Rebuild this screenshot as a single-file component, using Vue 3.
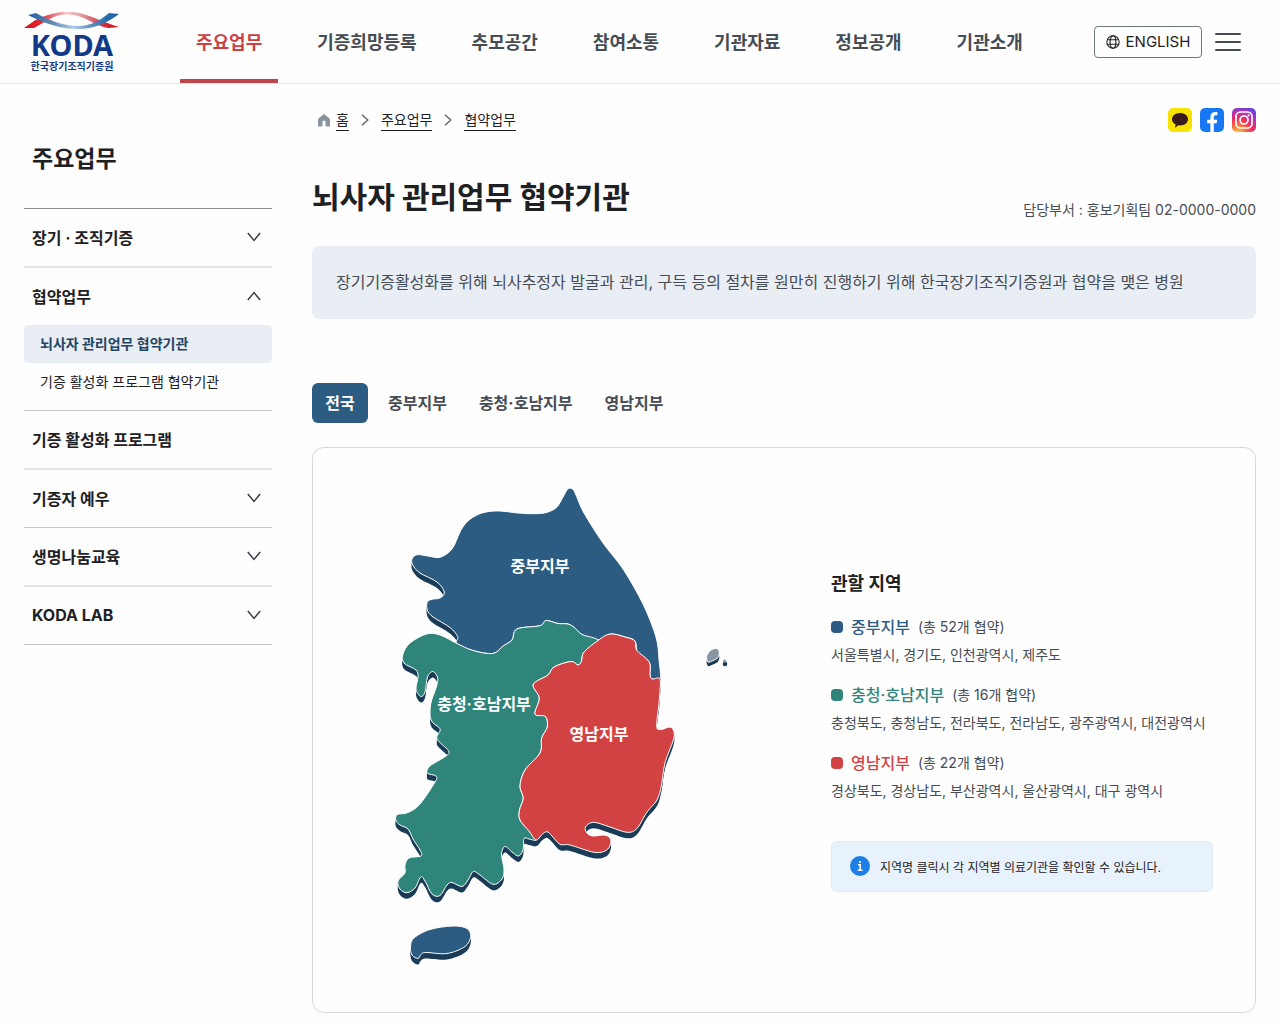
<script setup>
import { ref } from 'vue'

const nav = ['주요업무', '기증희망등록', '추모공간', '참여소통', '기관자료', '정보공개', '기관소개']

const menu = ref([
  { label: '장기 · 조직기증', expandable: true },
  {
    label: '협약업무',
    expandable: true,
    open: true,
    children: ['뇌사자 관리업무 협약기관', '기증 활성화 프로그램 협약기관'],
  },
  { label: '기증 활성화 프로그램' },
  { label: '기증자 예우', expandable: true },
  { label: '생명나눔교육', expandable: true },
  { label: 'KODA LAB', expandable: true },
])

const crumbs = ['홈', '주요업무', '협약업무']

const tabs = ['전국', '중부지부', '충청·호남지부', '영남지부']
const activeTab = ref('전국')

const branches = [
  { name: '중부지부', tone: 'blue', count: '(총 52개 협약)', areas: '서울특별시, 경기도, 인천광역시, 제주도' },
  { name: '충청·호남지부', tone: 'green', count: '(총 16개 협약)', areas: '충청북도, 충청남도, 전라북도, 전라남도, 광주광역시, 대전광역시' },
  { name: '영남지부', tone: 'red', count: '(총 22개 협약)', areas: '경상북도, 경상남도, 부산광역시, 울산광역시, 대구 광역시' },
]

// Closed smooth curve (Catmull-Rom) through a list of outline points
function outline(points) {
  const p = points.trim().split(/\s+/).map((s) => s.split(',').map(Number))
  const n = p.length
  let d = `M${p[0]}`
  for (let i = 0; i < n; i++) {
    const a = p[(i - 1 + n) % n]
    const b = p[i]
    const c = p[(i + 1) % n]
    const e = p[(i + 2) % n]
    const c1 = [b[0] + (c[0] - a[0]) / 6, b[1] + (c[1] - a[1]) / 6]
    const c2 = [c[0] - (e[0] - b[0]) / 6, c[1] - (e[1] - b[1]) / 6]
    d += `C${c1.map((v) => v.toFixed(1))} ${c2.map((v) => v.toFixed(1))} ${c}`
  }
  return d + 'Z'
}

const regions = [
  {
    tone: 'blue',
    label: '중부지부',
    x: 540,
    y: 572,
    d: outline(`412,559 417,554.7 428,556 440,557.3 452,549 460,532 466,523 475,516 486,512 500,511 518,513 537,513.7
      548,512 557,507 563,497 567,490 570,488.3 573,489.5 576,495 584,513 603,543 623,569 643,604 656,637 659,660 660,679
      652,678.5 650,675 649.3,662 638,654 635,641 625,637 610,634 598,640 582,634.5 575,628 568,624 558,623.5 546,620.5
      540,625.7 517,629 512,640 503,646 493,653.5 473,650.5 457,643.5 457.7,636.7 450,627.5 433,617 427.3,610 427.3,602
      432,599.3 440,598 444.3,592 437,582 420,573 412.7,565`),
  },
  {
    tone: 'green',
    label: '충청·호남지부',
    x: 484,
    y: 710,
    d: outline(`457,643.5 440,635 426.7,634 410,643 403,654 404,663 416,670 418,677 416,689 420.7,696.5 425,692 427.5,677
      433,671.5 437.7,678 436,688 430.7,704 431,720 439,727.5 440,731 437,739 448.3,750.5 446,756 430,766 427.3,773
      436,776 435,782 420,804 408,812.5 397.5,814.5 395.7,820 400,825 408,829 413,839 420,850 421,856 409,858
      405,865 405,873 398,881 400,889 407,892.7 415,888 420.7,877 425,881 432,894 440,895.5 447,885 452,882.5
      462,886.5 468,880 473.3,871.5 480,875 493,884.3 502,879 504,869 501.5,854 505,846.5 512,852 518.5,856 523,850
      524,838.5 529,839 536,840 529,831 520,820 519.5,810 523.3,798 520,786 525,770 540,753 541.7,738 547.3,727
      545.5,716.5 535,714 539.3,698 533.3,684.5 548,675 554,667 571,661.5 578,665 581.5,661 584,652 598,640.5
      582,634.5 575,628 568,624 558,623.5 546,620.5 540,625.7 517,629 512,640 503,646 493,653.5 473,650.5`),
  },
  {
    tone: 'red',
    label: '영남지부',
    x: 599,
    y: 740,
    d: outline(`598,640.5 610,634 625,637 635,641 636.5,650 649.3,662 650,675 652.5,679 660,679.3 659.3,700 656.7,726
      661,729.5 670,727 674,732 673,741 665,763 661.5,785 657,800 647,812 637,828.5 627,832.3 610,827 593.5,822.3
      585.5,827 587,833 593,836 604,835 610,838 610.5,844 606,850.5 594,852.3 570,845 560,844.3 552,836 547,831.7 542,834.5
      536,840 529,831 520,820 519.5,810 523.3,798 520,786 525,770 540,753 541.7,738 547.3,727 545.5,716.5 535,714
      539.3,698 533.3,684.5 548,675 554,667 571,661.5 578,665 581.5,661 584,652`),
  },
]

const jeju = outline(`410.5,947 414,938 430,929.5 453,926 467,928.5 470.7,936.5 465,946.5 447,953.5 426,952.5 421,954.5 418,958.5 412,955`)
const ulleung = outline(`706.7,656 711,650 717,648.5 719.3,652 718,657.5 713,660.5 708,662`)
const depth = [6, 4, 2]
</script>

<template>
  <div class="page">
    <header class="header">
      <a class="logo" href="#" aria-label="KODA 한국장기조직기증원">
        <svg class="ribbon" viewBox="0 0 96 18" aria-hidden="true">
          <defs>
            <linearGradient id="ribbonRed">
              <stop offset="0" stop-color="#d8101c" />
              <stop offset="0.18" stop-color="#dd2a33" />
              <stop offset="0.45" stop-color="#f3c9cc" />
              <stop offset="0.65" stop-color="#e08a90" />
              <stop offset="0.84" stop-color="#cf2c38" />
              <stop offset="1" stop-color="#d8101c" />
            </linearGradient>
            <linearGradient id="ribbonBlue">
              <stop offset="0" stop-color="#1d5fa8" />
              <stop offset="0.25" stop-color="#5f86ad" />
              <stop offset="0.5" stop-color="#a9cbe6" />
              <stop offset="0.72" stop-color="#5c87b4" />
              <stop offset="0.85" stop-color="#2c6fae" />
              <stop offset="1" stop-color="#1d5fa8" />
            </linearGradient>
          </defs>
          <path fill="url(#ribbonRed)" d="M0 16 10 9C28-1 46-2 59 2 70 5 82 11 95 15L85 16C76 15 67 9 57 5 45 1 34 2 24 8L10 16Z" />
          <path fill="url(#ribbonBlue)" d="M4 3 12 1C28 10 42 14 54 14 68 14 78 7 85 1L95 2C84 10 72 17 54 17 36 17 20 11 4 3Z" />
        </svg>
        <span class="logo-name">KODA</span>
        <span class="logo-sub">한국장기조직기증원</span>
      </a>
      <nav class="nav" aria-label="주 메뉴">
        <a v-for="(item, i) in nav" :key="item" href="#" :class="{ current: i === 0 }">{{ item }}</a>
      </nav>
      <div class="tools">
        <button type="button" class="english">
          <svg width="14" height="14" viewBox="0 0 14 14" fill="none" stroke="#1e2124" stroke-width="1.1" aria-hidden="true">
            <circle cx="7" cy="7" r="6.2" />
            <ellipse cx="7" cy="7" rx="2.9" ry="6.2" />
            <path d="M1.5 4.7h11M1.5 9.3h11" />
          </svg>
          ENGLISH
        </button>
        <button type="button" class="burger" aria-label="전체 메뉴">
          <svg width="26" height="20" viewBox="0 0 26 20" stroke="#464c53" stroke-width="2" stroke-linecap="round" aria-hidden="true">
            <path d="M1 2h24M1 10h24M1 18h24" />
          </svg>
        </button>
      </div>
    </header>

    <div class="body">
      <aside class="side">
        <h2>주요업무</h2>
        <ul class="menu">
          <li v-for="item in menu" :key="item.label">
            <button type="button" class="menu-head" :aria-expanded="item.expandable ? !!item.open : undefined" @click="item.expandable && (item.open = !item.open)">
              {{ item.label }}
              <svg v-if="item.expandable" :class="{ up: item.open }" width="14" height="10" viewBox="0 0 14 10" fill="none" stroke="#33363d" stroke-width="1.4" aria-hidden="true">
                <path d="M.8 1 7 8.4 13.2 1" />
              </svg>
            </button>
            <ul v-if="item.open && item.children" class="sub">
              <li v-for="(child, i) in item.children" :key="child">
                <a href="#" :class="{ current: i === 0 }">{{ child }}</a>
              </li>
            </ul>
          </li>
        </ul>
      </aside>

      <main class="main">
        <div class="top">
          <nav class="crumbs" aria-label="현재 위치">
            <svg class="home" width="14" height="14" viewBox="0 0 14 14" aria-hidden="true">
              <path fill="#8a949e" stroke="#8a949e" stroke-linejoin="round" d="M7 1.5 1.500 6V13h3.500V9a2 2 0 0 1 4 0v4h3.500V6Z" />
            </svg>
            <template v-for="(crumb, i) in crumbs" :key="crumb">
              <svg v-if="i" class="sep" width="8" height="12" viewBox="0 0 8 12" fill="none" stroke="#58616a" stroke-width="1.3" aria-hidden="true">
                <path d="M1 .8 6.8 6 1 11.2" />
              </svg>
              <a href="#">{{ crumb }}</a>
            </template>
          </nav>
          <div class="social">
            <a href="#" aria-label="카카오톡">
              <svg viewBox="0 0 24 24">
                <rect width="24" height="24" rx="5" fill="#f7e200" />
                <path fill="#391b1b" d="M12 5c-4.6 0-8 2.8-8 6.2 0 2.3 1.400 4.2 3.600 5.300L7 19.800l3.400-2.500c.5.1 1 .1 1.600.1 4.600 0 8-2.700 8-6.200S16.600 5 12 5Z" />
              </svg>
            </a>
            <a href="#" aria-label="페이스북">
              <svg viewBox="0 0 24 24">
                <rect width="24" height="24" rx="5" fill="#1877f2" />
                <path fill="#fff" d="M10.400 24v-8.800H7.200v-3.500h3.200V9.200c0-3.400 1.900-5.200 4.900-5.200 1 0 1.700.1 2.100.2v3.100h-1.500c-1.500 0-2.100.7-2.100 2v2.400h3.500l-.6 3.500h-2.900V24Z" />
              </svg>
            </a>
            <a href="#" aria-label="인스타그램">
              <svg viewBox="0 0 24 24">
                <defs>
                  <radialGradient id="insta" cx="0.25" cy="1.05" r="1.2">
                    <stop offset="0" stop-color="#ffcb4f" />
                    <stop offset="0.25" stop-color="#fb7a35" />
                    <stop offset="0.5" stop-color="#ee2f5b" />
                    <stop offset="0.75" stop-color="#b134b8" />
                    <stop offset="1" stop-color="#5a45dd" />
                  </radialGradient>
                </defs>
                <rect width="24" height="24" rx="5" fill="url(#insta)" />
                <g fill="none" stroke="#fff" stroke-width="1.7">
                  <rect x="4" y="4" width="16" height="16" rx="4.5" />
                  <circle cx="12" cy="12" r="4" />
                </g>
                <circle cx="16.6" cy="7.4" r="1.1" fill="#fff" />
              </svg>
            </a>
          </div>
        </div>

        <div class="heading">
          <h1>뇌사자 관리업무 협약기관</h1>
          <p>담당부서 : 홍보기획팀 02-0000-0000</p>
        </div>

        <p class="notice">장기기증활성화를 위해 뇌사추정자 발굴과 관리, 구득 등의 절차를 원만히 진행하기 위해 한국장기조직기증원과 협약을 맺은 병원</p>

        <div class="tabs" role="tablist">
          <button v-for="tab in tabs" :key="tab" type="button" role="tab" :aria-selected="tab === activeTab" @click="activeTab = tab">{{ tab }}</button>
        </div>

        <section class="panel">
          <div class="map">
            <svg viewBox="390 480 340 500" role="group" aria-label="지부별 지도">
              <g class="shade">
                <g v-for="dy in depth" :key="dy" :transform="`translate(0 ${dy})`">
                  <path v-for="r in regions" :key="r.tone" :d="r.d" />
                  <path :d="jeju" />
                </g>
                <path :d="ulleung" transform="translate(0 4)" />
                <circle cx="725" cy="664" r="2.3" />
              </g>
              <a v-for="r in regions" :key="r.tone" href="#">
                <path class="land" :class="r.tone" :d="r.d" />
              </a>
              <path class="land blue" :d="jeju" />
              <path class="land gray" :d="ulleung" />
              <circle class="gray" cx="724.7" cy="661" r="1.6" />
              <text v-for="r in regions" :key="r.label" :x="r.x" :y="r.y">{{ r.label }}</text>
            </svg>
          </div>
          <div class="legend">
            <h3>관할 지역</h3>
            <dl>
              <div v-for="b in branches" :key="b.name" :class="b.tone">
                <dt><i></i><strong>{{ b.name }}</strong><span>{{ b.count }}</span></dt>
                <dd>{{ b.areas }}</dd>
              </div>
            </dl>
            <p class="info">
              <svg width="20" height="20" viewBox="0 0 20 20" aria-hidden="true">
                <circle cx="10" cy="10" r="10" fill="#1d7fe6" />
                <path fill="none" stroke="#fff" stroke-width="1.5" d="M8 8.8h2.200v5.200M7.700 14.200h4.800" />
                <circle cx="10" cy="6" r="1.1" fill="#fff" />
              </svg>
              지역명 클릭시 각 지역별 의료기관을 확인할 수 있습니다.
            </p>
          </div>
        </section>
      </main>
    </div>
  </div>
</template>

<style>
body {
  background: #fefefe;
}
</style>

<style scoped>
.page {
  font-family: Inter, "Noto Sans CJK KR", sans-serif;
  font-size: 14px;
  color: #1e2124;
  word-break: keep-all;
}
.page * {
  box-sizing: border-box;
}
h1, h2, h3, p, ul, dl, dd {
  margin: 0;
  padding: 0;
}
ul {
  list-style: none;
}
a {
  color: inherit;
  text-decoration: none;
}
button {
  font: inherit;
  color: inherit;
  background: none;
  border: 0;
  padding: 0;
  cursor: pointer;
}
svg {
  display: block;
  flex: none;
}

.header {
  display: flex;
  align-items: center;
  height: 84px;
  padding: 0 39px 0 24px;
  border-bottom: 1px solid #e4e6e8;
}
.logo {
  display: flex;
  flex-direction: column;
  align-items: center;
  width: 96px;
  margin-right: 60px;
  color: #143a87;
}
.ribbon {
  width: 96px;
  height: 18px;
}
.logo-name {
  font: 700 29px/30px "Noto Sans", sans-serif;
}
.logo-sub {
  font-size: 10px;
  font-weight: 700;
  line-height: 12px;
  white-space: nowrap;
}
.nav {
  display: flex;
  align-self: stretch;
  gap: 23px;
}
.nav a {
  display: flex;
  align-items: center;
  padding: 2px 16px 0;
  border-bottom: 4px solid transparent;
  font-size: 18px;
  font-weight: 700;
  white-space: nowrap;
  color: #464c53;
}
.nav a.current {
  color: #cb3f45;
  border-color: #c0464a;
}
.tools {
  display: flex;
  align-items: center;
  gap: 13px;
  margin-left: auto;
}
.english {
  display: flex;
  align-items: center;
  justify-content: center;
  gap: 6px;
  width: 108px;
  height: 32px;
  border: 1px solid #6d7882;
  border-radius: 4px;
  font-size: 15px;
}

.body {
  display: flex;
  gap: 40px;
  padding: 0 24px 11px;
}
.side {
  flex: none;
  width: 248px;
}
.side h2 {
  padding: 57px 8px 31px;
  font-size: 23px;
  line-height: 36px;
}
.menu {
  border-top: 1px solid #8a8d91;
}
.menu > li {
  border-bottom: 1px solid #c6c8ca;
}
.menu > li:nth-child(odd) {
  border-bottom: 2px solid #e4e5e6;
}
.menu-head {
  display: flex;
  align-items: center;
  justify-content: space-between;
  width: 100%;
  height: 57px;
  padding: 0 11px 2px 8px;
  font-size: 16px;
  font-weight: 700;
}
.menu-head .up {
  transform: rotate(180deg);
}
.sub {
  padding-bottom: 9px;
}
.sub a {
  display: block;
  padding: 0 16px;
  border-radius: 4px;
  line-height: 38px;
}
.sub a.current {
  background: #e9edf4;
  font-weight: 700;
  color: #1f4565;
}

.main {
  flex: 1;
  min-width: 0;
  padding-top: 24px;
}
.top {
  display: flex;
  align-items: center;
  justify-content: space-between;
}
.crumbs {
  display: flex;
  align-items: center;
  padding-left: 5px;
}
.crumbs a {
  border-bottom: 1px solid #1e2124;
  line-height: 20px;
}
.home {
  margin-right: 5px;
}
.sep {
  margin: 0 12px;
}
.social {
  display: flex;
  gap: 8px;
}
.social svg {
  width: 24px;
  height: 24px;
}
.heading {
  display: flex;
  align-items: flex-end;
  justify-content: space-between;
  margin-top: 41px;
}
.heading h1 {
  font-size: 30px;
  line-height: 48px;
}
.heading p {
  line-height: 22px;
  color: #464c53;
}
.notice {
  margin-top: 25px;
  padding: 24px;
  border-radius: 8px;
  background: #e9edf4;
  font-size: 16px;
  line-height: 25px;
  color: #464c53;
}
.tabs {
  display: flex;
  gap: 8px;
  margin-top: 64px;
}
.tabs button {
  min-width: 56px;
  height: 40px;
  padding: 0 12px 2px;
  border-radius: 6px;
  font-size: 16px;
  font-weight: 700;
  color: #464c53;
}
.tabs button[aria-selected="true"] {
  background: #2c5c82;
  color: #fff;
}
.panel {
  display: flex;
  align-items: center;
  gap: 24px;
  margin-top: 24px;
  padding: 32px 42px 32px 0;
  border: 1px solid #d6d9dc;
  border-radius: 12px;
}
.map {
  flex: 1;
}
.map svg {
  width: 340px;
  height: 500px;
  margin: 0 auto;
}
.shade {
  fill: #1a3c57;
}
.land {
  stroke: #fff;
  stroke-width: 1;
}
.map .blue {
  fill: #2c5c82;
}
.map .green {
  fill: #30857b;
}
.map .red {
  fill: #d34243;
}
.map .gray {
  fill: #8a97a3;
}
.map text {
  fill: #fff;
  font-size: 16px;
  font-weight: 700;
  text-anchor: middle;
  pointer-events: none;
}
.legend {
  flex: none;
  width: 382px;
}
.legend h3 {
  margin-bottom: 14px;
  font-size: 18px;
  line-height: 30px;
}
.legend dl {
  display: flex;
  flex-direction: column;
  gap: 12px;
}
.legend dt {
  display: flex;
  align-items: center;
  gap: 8px;
  line-height: 28px;
  color: #464c53;
}
.legend dd {
  line-height: 28px;
  white-space: nowrap;
  color: #464c53;
}
.legend i {
  width: 12px;
  height: 12px;
  border-radius: 4px;
  background: currentColor;
}
.legend strong {
  font-size: 16px;
  font-weight: 500;
}
.legend .blue i,
.legend .blue strong {
  color: #2c5c82;
}
.legend .green i,
.legend .green strong {
  color: #30857b;
}
.legend .red i,
.legend .red strong {
  color: #d34243;
}
.info {
  display: flex;
  align-items: center;
  gap: 10px;
  height: 51px;
  margin-top: 36px;
  padding: 0 18px;
  border: 1px solid #dcebf8;
  border-radius: 6px;
  background: #e7f2fc;
  font-size: 12px;
}
</style>
